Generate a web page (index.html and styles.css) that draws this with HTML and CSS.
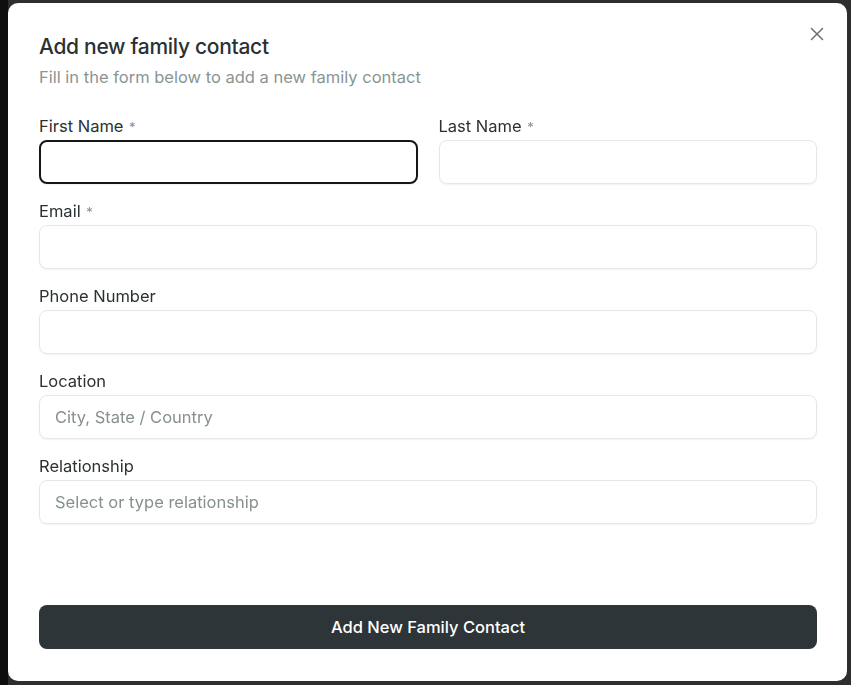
FILE: index.html
```html
<!DOCTYPE html>
<html lang="en">
<head>
    <meta charset="UTF-8">
    <meta name="viewport" content="width=device-width, initial-scale=1.0">
    <title>Add new family contact</title>
    <link rel="stylesheet" href="styles.css">
</head>
<body>

    <div id="modal">
        <button class="close-btn" aria-label="Close">
            <svg width="14" height="14" viewBox="0 0 14 14">
                <path d="M1.5 1.5 L12.5 12.5 M12.5 1.5 L1.5 12.5" stroke="#6b6f70" stroke-width="1.5" stroke-linecap="round" fill="none"/>
            </svg>
        </button>

        <div id="modal-header">
            <div class="modal-title">Add new family contact</div>
            <div class="modal-subtitle">Fill in the form below to add a new family contact</div>
        </div>

        <form id="contact-form" onsubmit="return false;">
            <div class="row">
                <div class="field">
                    <label for="first-name" class="field-label">First Name <span class="req">*</span></label>
                    <input type="text" id="first-name" class="field-input focused" autofocus>
                </div>
                <div class="field">
                    <label for="last-name" class="field-label">Last Name <span class="req">*</span></label>
                    <input type="text" id="last-name" class="field-input">
                </div>
            </div>

            <div class="field">
                <label for="email" class="field-label">Email <span class="req">*</span></label>
                <input type="email" id="email" class="field-input">
            </div>

            <div class="field">
                <label for="phone" class="field-label">Phone Number</label>
                <input type="tel" id="phone" class="field-input">
            </div>

            <div class="field">
                <label for="location" class="field-label">Location</label>
                <input type="text" id="location" class="field-input" placeholder="City, State / Country">
            </div>

            <div class="field">
                <label for="relationship" class="field-label">Relationship</label>
                <input type="text" id="relationship" class="field-input" placeholder="Select or type relationship">
            </div>

            <button type="submit" class="submit-btn">Add New Family Contact</button>
        </form>
    </div>

</body>
</html>
```

FILE: styles.css
```css
 html,
 body {
     height: 100%;
 }

 body {
     font-family: 'Inter', 'Liberation Sans', sans-serif;
     margin: 0;
     padding: 3px 4px 4px 8px;
     box-sizing: border-box;
     background-color: #2e2e2e;
     background-image: linear-gradient(to right, #0e0e0e 0, #0e0e0e 8px, transparent 8px);
     color: #2d3436;
 }

 #modal {
     position: relative;
     height: 678px;
     width: 839px;
     box-sizing: border-box;
     padding: 30px 30px 32px 31px;
     background-color: #fff;
     border-radius: 10px;
     display: flex;
     flex-direction: column;
 }

 .close-btn {
     position: absolute;
     top: 23px;
     right: 22px;
     width: 16px;
     height: 16px;
     padding: 0;
     border: none;
     background: none;
     display: flex;
     align-items: center;
     justify-content: center;
 }

 .modal-title {
     font-size: 21px;
     font-weight: 500;
     letter-spacing: -0.3px;
     color: #2b3133;
     line-height: 28px;
 }

 .modal-subtitle {
     margin-top: 5px;
     font-size: 16.5px;
     color: #8a9592;
     line-height: 22px;
 }

 #contact-form {
     margin-top: 26px;
     flex: 1;
     display: flex;
     flex-direction: column;
 }

 .row {
     display: flex;
     gap: 21px;
 }

 .row .field {
     flex: 1;
 }

 .field {
     margin-bottom: 15px;
 }

 .field-label {
     display: block;
     font-size: 16.5px;
     line-height: 24px;
     height: 24px;
     margin-bottom: 2px;
     color: #2b3133;
 }

 .req {
     color: #8a908e;
     font-size: 13px;
     line-height: 1;
     margin-left: 1px;
 }

 .field-input {
     display: block;
     width: 100%;
     height: 44px;
     box-sizing: border-box;
     padding: 0 15px;
     border: 1px solid #e6e8e8;
     border-radius: 8px;
     box-shadow: 0 1px 2px rgba(0, 0, 0, 0.06);
     font-family: inherit;
     font-size: 16.5px;
     color: #2b3133;
     background-color: #fff;
     outline: none;
 }

 .field-input::placeholder {
     color: #86908d;
 }

 .field-input.focused {
     border: 2px solid #141718;
     padding: 0 14px;
     caret-color: #141718;
 }

 .submit-btn {
     margin-top: auto;
     height: 44px;
     width: 100%;
     border: none;
     border-radius: 8px;
     background-color: #2d3538;
     color: #fff;
     font-family: inherit;
     font-size: 16.5px;
     font-weight: 500;
     cursor: pointer;
 }
```
